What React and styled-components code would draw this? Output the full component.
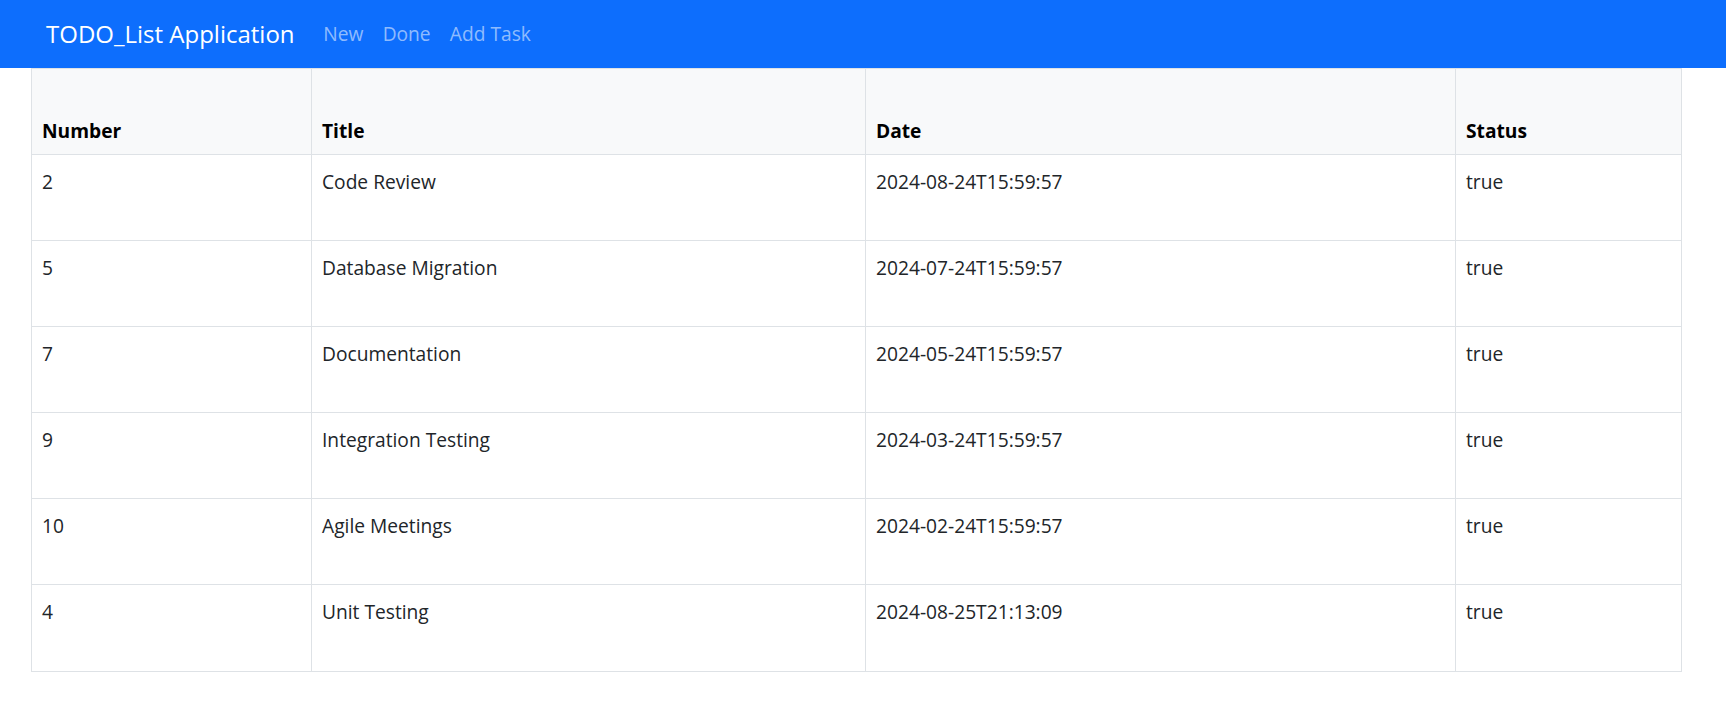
import React from "react";
import styled, { createGlobalStyle } from "styled-components";

const Global = createGlobalStyle`
  html, body { margin: 0; padding: 0; background: #fff; }
  body {
    font-family: "Open Sans", "Noto Sans", "Liberation Sans", sans-serif;
    font-size: 19.2px;
    line-height: 1.5;
    color: #212529;
  }
  * { box-sizing: border-box; }
`;

const NavBar = styled.nav`
  height: 68px;
  background: #0d6efd;
  display: flex;
  align-items: center;
  padding: 0 46px;
`;

const Brand = styled.a`
  font-size: 24px;
  color: #fff;
  text-decoration: none;
  margin-right: 19.2px;
  white-space: nowrap;
`;

const NavList = styled.div`
  display: flex;
  align-items: center;
`;

const NavLink = styled.a`
  font-size: 19.2px;
  color: rgba(255, 255, 255, 0.55);
  padding: 0 9.6px;
  text-decoration: none;
`;

const Main = styled.main`
  padding: 0 45px 0 31px;
`;

const Table = styled.table`
  width: 1650px;
  border-collapse: collapse;
  table-layout: fixed;
  border: 1px solid #dee2e6;
`;

const HeadRow = styled.tr`
  height: 86px;
  background: #f8f9fa;
`;

const Th = styled.th`
  text-align: left;
  vertical-align: bottom;
  font-weight: 700;
  color: #000;
  padding: 9.6px 10px 8.6px;
  border: 1px solid #dee2e6;
`;

const Row = styled.tr`
  height: 86.1px;
`;

const Td = styled.td`
  vertical-align: top;
  padding: 12.8px 10px 9.6px;
  border: 1px solid #dee2e6;
  color: #212529;
`;

const rows = [
  { n: 2, title: "Code Review", date: "2024-08-24T15:59:57", status: "true" },
  { n: 5, title: "Database Migration", date: "2024-07-24T15:59:57", status: "true" },
  { n: 7, title: "Documentation", date: "2024-05-24T15:59:57", status: "true" },
  { n: 9, title: "Integration Testing", date: "2024-03-24T15:59:57", status: "true" },
  { n: 10, title: "Agile Meetings", date: "2024-02-24T15:59:57", status: "true" },
  { n: 4, title: "Unit Testing", date: "2024-08-25T21:13:09", status: "true" },
];

export default function App() {
  return (
    <>
      <Global />
      <NavBar>
        <Brand href="#">TODO_List Application</Brand>
        <NavList>
          <NavLink href="#">New</NavLink>
          <NavLink href="#">Done</NavLink>
          <NavLink href="#">Add Task</NavLink>
        </NavList>
      </NavBar>
      <Main>
        <Table>
          <colgroup>
            <col style={{ width: "280px" }} />
            <col style={{ width: "554px" }} />
            <col style={{ width: "590px" }} />
            <col style={{ width: "226px" }} />
          </colgroup>
          <thead>
            <HeadRow>
              <Th>Number</Th>
              <Th>Title</Th>
              <Th>Date</Th>
              <Th>Status</Th>
            </HeadRow>
          </thead>
          <tbody>
            {rows.map((r) => (
              <Row key={r.n}>
                <Td>{r.n}</Td>
                <Td>{r.title}</Td>
                <Td>{r.date}</Td>
                <Td>{r.status}</Td>
              </Row>
            ))}
          </tbody>
        </Table>
      </Main>
    </>
  );
}
